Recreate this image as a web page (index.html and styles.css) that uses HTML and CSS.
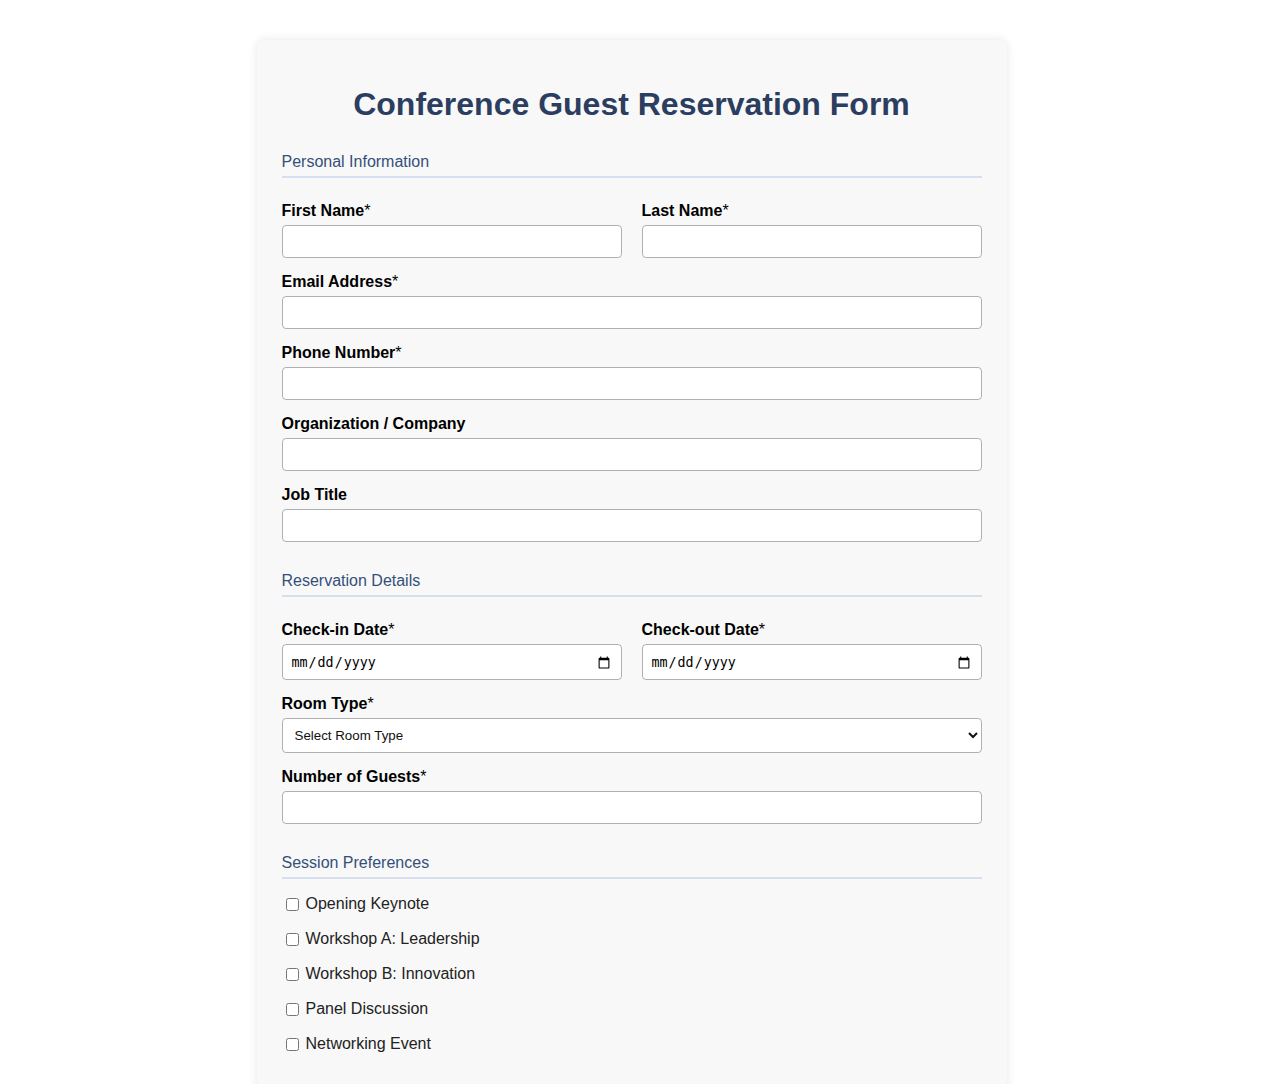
FILE: index.html
```html
<!DOCTYPE html>
<html lang="en">
<head>
<meta charset="utf-8">
<title>Conference Guest Reservation Form</title>
<link rel="stylesheet" href="styles.css">
</head>
<body>
<div class="card">
  <h1 class="title">Conference Guest Reservation Form</h1>
  <form>
    <section class="section">
      <h2 class="section-title">Personal Information</h2>
      <div class="fields">
        <div class="row">
          <div class="group"><label class="label">First Name<span class="req">*</span></label><input class="input" type="text"></div>
          <div class="group"><label class="label">Last Name<span class="req">*</span></label><input class="input" type="text"></div>
        </div>
        <div class="group"><label class="label">Email Address<span class="req">*</span></label><input class="input" type="email"></div>
        <div class="group"><label class="label">Phone Number<span class="req">*</span></label><input class="input" type="tel"></div>
        <div class="group"><label class="label">Organization / Company</label><input class="input" type="text"></div>
        <div class="group"><label class="label">Job Title</label><input class="input" type="text"></div>
      </div>
    </section>
    <section class="section">
      <h2 class="section-title">Reservation Details</h2>
      <div class="fields">
        <div class="row">
          <div class="group"><label class="label">Check-in Date<span class="req">*</span></label><input class="input date" type="date"></div>
          <div class="group"><label class="label">Check-out Date<span class="req">*</span></label><input class="input date" type="date"></div>
        </div>
        <div class="group"><label class="label">Room Type<span class="req">*</span></label>
          <select class="input select">
            <option>Select Room Type</option>
            <option>Single</option>
            <option>Double</option>
            <option>Suite</option>
          </select>
        </div>
        <div class="group"><label class="label">Number of Guests<span class="req">*</span></label><input class="input" type="number"></div>
      </div>
    </section>
    <section class="section">
      <h2 class="section-title">Session Preferences</h2>
      <div class="checks">
        <label class="check"><input type="checkbox" class="box"> Opening Keynote</label>
        <label class="check"><input type="checkbox" class="box"> Workshop A: Leadership</label>
        <label class="check"><input type="checkbox" class="box"> Workshop B: Innovation</label>
        <label class="check"><input type="checkbox" class="box"> Panel Discussion</label>
        <label class="check"><input type="checkbox" class="box"> Networking Event</label>
      </div>
    </section>
  </form>
</div>
</body>
</html>
```

FILE: styles.css
```css
html, body {
  margin: 0;
  padding: 0;
  background: #ffffff;
  font-family: "Liberation Sans", Arial, sans-serif;
}
body {
  padding: 40px 0 40px;
}
.card {
  width: 750px;
  box-sizing: border-box;
  margin: 0 auto;
  padding: 25px 25px 30px;
  background: #f8f8f8;
  border-radius: 8px;
  box-shadow: 0 0 10px rgba(0, 0, 0, 0.1);
}
.title {
  margin: 21px 0 30px;
  text-align: center;
  font-size: 32px;
  font-weight: bold;
  color: #2c3e5f;
  line-height: 37px;
}
.section {
  padding-bottom: 15px;
}
.section-title {
  margin: 0;
  font-size: 16px;
  font-weight: normal;
  color: #34507a;
  line-height: 18px;
  padding-bottom: 5px;
  border-bottom: 2px solid #d6dfee;
}
.fields {
  padding-top: 24px;
}
.row {
  display: grid;
  grid-template-columns: 1fr 1fr;
  column-gap: 20px;
}
.group {
  margin-bottom: 15px;
}
.label {
  display: block;
  font-size: 16px;
  font-weight: bold;
  color: #000;
  line-height: 18px;
  margin-bottom: 5px;
}
.req {
  font-weight: normal;
}
.input {
  display: block;
  width: 100%;
  box-sizing: border-box;
  padding: 8px;
  border: 1px solid #b0b0b0;
  border-radius: 4px;
  background: #ffffff;
  font-size: 13.333px;
}
.date {
  height: 36px;
  padding-top: 9px;
  padding-bottom: 7px;
}
.select {
  padding: 8px;
  color: #111;
}
.checks {
  padding-top: 15px;
}
.check {
  display: flex;
  align-items: center;
  height: 20px;
  margin-bottom: 15px;
  font-size: 16px;
  color: #222;
}
.box {
  margin: 3px 7px 3px 4px;
  width: 13px;
  height: 13px;
}
```
